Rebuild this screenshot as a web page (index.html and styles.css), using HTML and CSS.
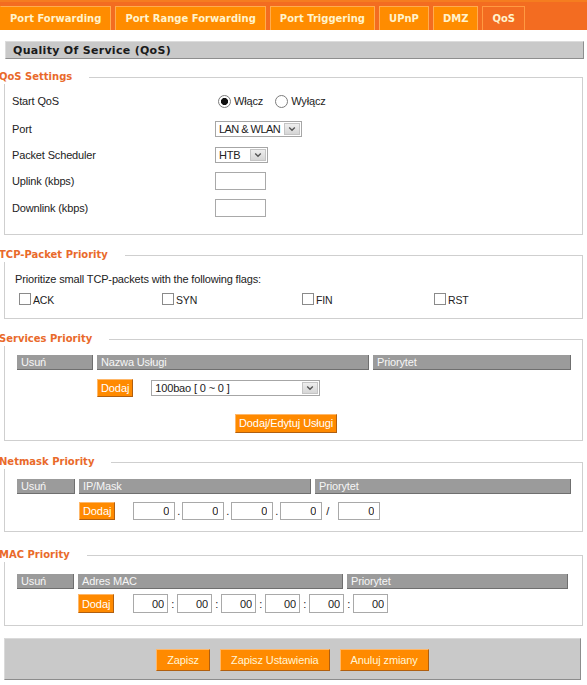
FILE: index.html
```html
<!DOCTYPE html>
<html lang="pl">
<head>
<meta charset="utf-8">
<title>Quality Of Service (QoS)</title>
<link rel="stylesheet" href="styles.css">
</head>
<body>
<nav class="tabs">
  <a class="tab">Port Forwarding</a>
  <a class="tab">Port Range Forwarding</a>
  <a class="tab">Port Triggering</a>
  <a class="tab">UPnP</a>
  <a class="tab">DMZ</a>
  <a class="tab active">QoS</a>
</nav>

<h2 class="page-title">Quality Of Service (QoS)</h2>

<fieldset class="box box-settings">
  <legend>QoS Settings</legend>
  <div class="form">
    <div class="lbl">Start QoS</div>
    <div class="ctl">
      <label class="radio first"><input type="radio" name="qos" checked><span>Włącz</span></label>
      <label class="radio"><input type="radio" name="qos"><span>Wyłącz</span></label>
    </div>

    <div class="lbl">Port</div>
    <div class="ctl">
      <div class="sel sel-port"><span class="sel-val">LAN &amp; WLAN</span><span class="sel-btn"><svg width="8" height="6" viewBox="0 0 8 6"><path d="M1.2 1.5 L4 4.3 L6.8 1.5" fill="none" stroke="#555" stroke-width="1.4"/></svg></span></div>
    </div>

    <div class="lbl">Packet Scheduler</div>
    <div class="ctl">
      <div class="sel sel-htb"><span class="sel-val">HTB</span><span class="sel-btn"><svg width="8" height="6" viewBox="0 0 8 6"><path d="M1.2 1.5 L4 4.3 L6.8 1.5" fill="none" stroke="#555" stroke-width="1.4"/></svg></span></div>
    </div>

    <div class="lbl">Uplink (kbps)</div>
    <div class="ctl"><input class="txt" type="text"></div>

    <div class="lbl">Downlink (kbps)</div>
    <div class="ctl"><input class="txt" type="text"></div>
  </div>
</fieldset>

<fieldset class="box box-tcp">
  <legend>TCP-Packet Priority</legend>
  <p class="hint">Prioritize small TCP-packets with the following flags:</p>
  <div class="flags">
    <label class="chk"><input type="checkbox"><span>ACK</span></label>
    <label class="chk"><input type="checkbox"><span>SYN</span></label>
    <label class="chk"><input type="checkbox"><span>FIN</span></label>
    <label class="chk"><input type="checkbox"><span>RST</span></label>
  </div>
</fieldset>

<fieldset class="box box-svc">
  <legend>Services Priority</legend>
  <div class="tbl tbl-svc">
    <div class="th">Usuń</div>
    <div class="th">Nazwa Usługi</div>
    <div class="th">Priorytet</div>
    <div></div>
    <div class="row-add">
      <button class="btn btn-sm">Dodaj</button>
      <div class="sel sel-svc"><span class="sel-val">100bao [ 0 ~ 0 ]</span><span class="sel-btn"><svg width="8" height="6" viewBox="0 0 8 6"><path d="M1.2 1.5 L4 4.3 L6.8 1.5" fill="none" stroke="#555" stroke-width="1.4"/></svg></span></div>
    </div>
    <div></div>
  </div>
  <div class="svc-edit"><button class="btn btn-edit">Dodaj/Edytuj Usługi</button></div>
</fieldset>

<fieldset class="box box-net">
  <legend>Netmask Priority</legend>
  <div class="tbl tbl-net">
    <div class="th">Usuń</div>
    <div class="th">IP/Mask</div>
    <div class="th">Priorytet</div>
    <div></div>
    <div class="row-add">
      <button class="btn btn-sm">Dodaj</button>
      <div class="ipgroup">
        <input class="num num-ip" type="text" value="0"><span class="sep">.</span>
        <input class="num num-ip" type="text" value="0"><span class="sep">.</span>
        <input class="num num-ip" type="text" value="0"><span class="sep">.</span>
        <input class="num num-ip" type="text" value="0"><span class="sep sep-slash">/</span>
        <input class="num num-ip" type="text" value="0">
      </div>
    </div>
    <div></div>
  </div>
</fieldset>

<fieldset class="box box-mac">
  <legend>MAC Priority</legend>
  <div class="tbl tbl-mac">
    <div class="th">Usuń</div>
    <div class="th">Adres MAC</div>
    <div class="th">Priorytet</div>
    <div></div>
    <div class="row-add">
      <button class="btn btn-sm btn-mac">Dodaj</button>
      <div class="ipgroup">
        <input class="num num-mac" type="text" value="00"><span class="sep sep-colon">:</span>
        <input class="num num-mac" type="text" value="00"><span class="sep sep-colon">:</span>
        <input class="num num-mac" type="text" value="00"><span class="sep sep-colon">:</span>
        <input class="num num-mac" type="text" value="00"><span class="sep sep-colon">:</span>
        <input class="num num-mac" type="text" value="00"><span class="sep sep-colon">:</span>
        <input class="num num-mac" type="text" value="00">
      </div>
    </div>
    <div></div>
  </div>
</fieldset>

<div class="actions">
  <button class="btn btn-lg">Zapisz</button>
  <button class="btn btn-lg">Zapisz Ustawienia</button>
  <button class="btn btn-lg">Anuluj zmiany</button>
</div>
</body>
</html>
```

FILE: styles.css
```css
html, body {
  margin: 0;
  padding: 0;
  background: #fff;
}

body {
  width: 587px;
  font-family: "Liberation Sans", Arial, sans-serif;
  font-size: 11px;
  color: #222;
  letter-spacing: -0.15px;
}

/* ---------- tabs ---------- */
.tabs {
  display: flex;
  gap: 4px;
  height: 30px;
  box-sizing: border-box;
  background: #f36c21;
  border-top: 2px solid #f57d20;
  padding-top: 4px;
}

.tab {
  height: 24px;
  box-sizing: border-box;
  padding: 0 9px;
  border: 1px solid #ffac4f;
  border-bottom: 0;
  background: #ff8c00;
  color: #fff3cc;
  font-family: "DejaVu Sans", Verdana, sans-serif;
  font-weight: bold;
  font-size: 10px;
  letter-spacing: 0;
  line-height: 23px;
  white-space: nowrap;
}

.tab:first-child {
  border-left-color: #ff8c00;
}

.tab.active {
  background: #f36c21;
  border-color: #ff9a42;
}

/* ---------- page title ---------- */
.page-title {
  margin: 11px 3px 0 5px;
  height: 18px;
  box-sizing: border-box;
  padding-left: 7px;
  background: #c9c9c9;
  border: 1px solid;
  border-color: #dcdcdc #8e8e8e #8e8e8e #dcdcdc;
  font-family: "DejaVu Sans", Verdana, sans-serif;
  font-weight: bold;
  font-size: 11px;
  letter-spacing: 0.3px;
  line-height: 17px;
  color: #1a1a1a;
}

/* ---------- fieldsets ---------- */
.box {
  margin: 13px 4px 0;
  padding: 0;
  min-width: 0;
  border: 1px solid #cfcfcf;
}

.box legend {
  margin-left: -6px;
  padding: 0 17px 0 0;
  background: #fff;
  font-family: "DejaVu Sans", Verdana, sans-serif;
  font-weight: bold;
  font-size: 10px;
  letter-spacing: 0;
  line-height: 14px;
  color: #e96a2b;
}

.box-settings { margin-top: 11px; }
.box-tcp { margin-top: 13px; }
.box-svc { margin-top: 13px; }
.box-net { margin-top: 14px; }
.box-mac { margin-top: 16px; }

/* ---------- QoS settings form ---------- */
.form {
  display: grid;
  grid-template-columns: 203px 1fr;
  grid-template-rows: 28px 27px 26px 26px 28px;
  align-items: center;
  padding: 3px 0 12px 7px;
}

.lbl {
  line-height: 14px;
}

.ctl {
  display: flex;
  align-items: center;
}

.radio {
  display: flex;
  align-items: center;
  gap: 3px;
  margin-right: 12px;
}

.radio.first {
  margin-left: 3px;
}

.radio input {
  appearance: none;
  -webkit-appearance: none;
  width: 13px;
  height: 13px;
  margin: 0;
  border: 1px solid #7c7c7c;
  border-radius: 50%;
  background: #fff;
}

.radio input:checked {
  background: radial-gradient(circle, #111 0, #111 3.2px, #fff 3.9px);
}

.sel {
  display: flex;
  align-items: center;
  height: 16px;
  box-sizing: border-box;
  border: 1px solid #a6a6a6;
  background: #fff;
}

.sel-val {
  flex: 1;
  min-width: 0;
  overflow: hidden;
  padding-left: 3px;
  line-height: 14px;
  white-space: nowrap;
}

.sel-port .sel-val {
  letter-spacing: -0.55px;
}

.sel-btn {
  display: flex;
  flex: none;
  align-items: center;
  justify-content: center;
  width: 16px;
  height: 12px;
  box-sizing: border-box;
  margin-right: 1px;
  border: 1px solid #c4c4c4;
  background: linear-gradient(#eeeeee, #d6d6d6);
}

.sel-port { width: 87px; }
.sel-htb { width: 53px; }
.sel-svc { width: 169px; }

.txt {
  width: 51px;
  height: 18px;
  box-sizing: border-box;
  margin: 0;
  border: 1px solid #a9a9a9;
  padding: 0 3px;
  font: inherit;
}

/* ---------- TCP flags ---------- */
.hint {
  margin: 10px 0 0 10px;
  line-height: 14px;
}

.flags {
  display: grid;
  grid-template-columns: 143px 140px 132px 1fr;
  align-items: end;
  height: 16px;
  margin-top: 3px;
  padding: 0 0 13px 14px;
}

.chk {
  display: flex;
  align-items: flex-end;
  gap: 2px;
}

.chk input {
  appearance: none;
  -webkit-appearance: none;
  width: 12px;
  height: 12px;
  margin: 0;
  border: 1px solid #8a8a8a;
  background: #fff;
}

.chk span {
  font-size: 10.5px;
  line-height: 10px;
}

/* ---------- tables ---------- */
.tbl {
  display: grid;
  column-gap: 4px;
  margin-left: 12px;
  align-items: start;
}

.tbl-svc {
  grid-template-columns: 76px 272px 198px;
  row-gap: 9px;
  margin-top: 9px;
}

.tbl-net {
  grid-template-columns: 58px 232px 256px;
  row-gap: 8px;
  margin-top: 10px;
  padding-bottom: 11px;
}

.tbl-mac {
  grid-template-columns: 57px 265px 221px;
  row-gap: 5px;
  margin-top: 12px;
  padding-bottom: 12px;
}

.th {
  height: 15px;
  box-sizing: border-box;
  padding-left: 4px;
  background: #9b9b9b;
  border-right: 1px solid #6f6f6f;
  border-bottom: 1px solid #6f6f6f;
  color: #f6f6f6;
  line-height: 14px;
  white-space: nowrap;
}

.row-add {
  display: flex;
  align-items: center;
  white-space: nowrap;
}

.tbl-svc .row-add { gap: 18px; }
.tbl-net .row-add { gap: 18px; }
.tbl-mac .row-add { gap: 19px; }

.svc-edit {
  margin-top: 17px;
  padding: 0 0 7px 230px;
}

/* ---------- buttons ---------- */
.btn {
  margin: 0;
  box-sizing: border-box;
  border: 1px solid;
  border-color: #ffb86a #b05f10 #b05f10 #ffb86a;
  background: #ff8a00;
  color: #fff;
  font-family: "Liberation Sans", Arial, sans-serif;
  font-size: 11px;
  letter-spacing: -0.1px;
  cursor: pointer;
}

.btn-sm {
  height: 18px;
  padding: 0 3px;
  line-height: 16px;
}

.btn-mac {
  height: 19px;
}

.btn-edit {
  height: 19px;
  padding: 0 3px;
  line-height: 17px;
}

.btn-lg {
  height: 22px;
  padding: 0 10px;
  line-height: 20px;
  color: #fff5d6;
}

/* ---------- ip / mac inputs ---------- */
.ipgroup {
  display: flex;
  align-items: center;
}

.num {
  height: 18px;
  box-sizing: border-box;
  margin: 0;
  border: 1px solid #a9a9a9;
  text-align: right;
  font: inherit;
  color: #222;
}

.num-ip {
  width: 42px;
  padding: 0 5px 0 0;
}

.num-mac {
  width: 35px;
  height: 19px;
  padding: 0 3px 0 0;
}

.sep {
  width: 7px;
  text-align: center;
  line-height: 14px;
}

.sep-slash {
  width: 16px;
  text-align: left;
  padding-left: 4px;
  box-sizing: border-box;
}

.sep-colon {
  width: 9px;
}

/* ---------- actions ---------- */
.actions {
  display: flex;
  justify-content: center;
  align-items: flex-start;
  gap: 10px;
  height: 42px;
  box-sizing: border-box;
  margin: 12px 6px 0 4px;
  padding-top: 10px;
  background: #c9c9c9;
  border: 1px solid;
  border-color: #dadada #8c8c8c #8c8c8c #dadada;
}
```
